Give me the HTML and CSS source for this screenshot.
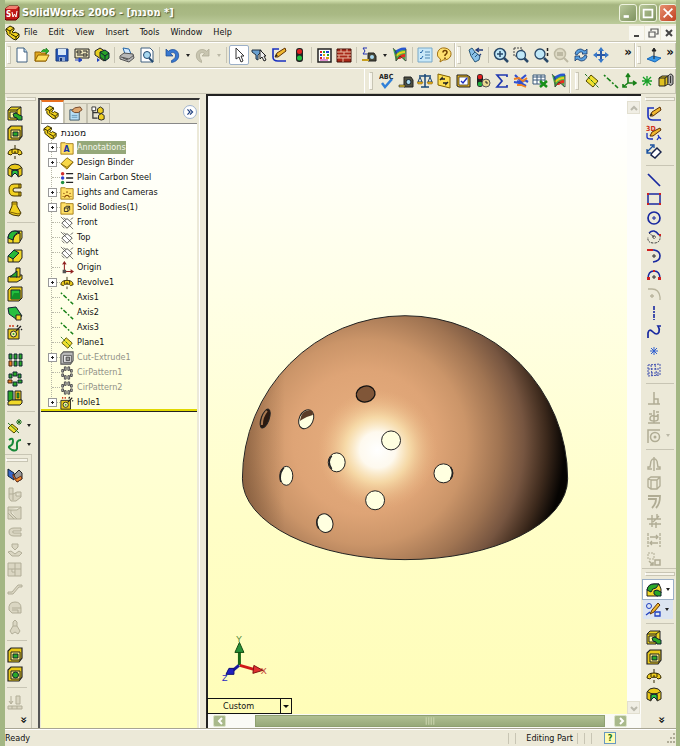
FILE: index.html
```html
<!DOCTYPE html>
<html lang="en">
<head>
<meta charset="utf-8">
<meta name="viewport" content="width=device-width, initial-scale=1">
<title>SolidWorks 2006 - [מסננת *]</title>
<link rel="stylesheet" href="styles.css">
</head>
<body>
<svg class="defs" aria-hidden="true">
<defs>
<symbol id="part" viewBox="0 0 16 16"><path d="M1 4l4-3 4 2v2l-2 2 2 1 1-1 4 2v3l-3 3-3-1-6-5V7L1 6z" fill="#f0d020" stroke="#2a2400"/><path d="M1 4l4 2 4-3M5 6v3M6 9l5 3 3-3M11 12v2" fill="none" stroke="#2a2400"/></symbol>
<symbol id="app" viewBox="0 0 16 16"><path d="M1 4l4-3h9l1 1v10l-3 3H2l-1-1z" fill="#c01818" stroke="#600"/><path d="M1 4l4-3h10l-3 3z" fill="#f08070"/><text x="2" y="12" font-size="8" font-weight="bold" fill="#fff">S</text><path d="M8 7l1 5 1.500-3 1.500 3 1-6" fill="none" stroke="#fff"/></symbol>
<symbol id="new" viewBox="0 0 16 16"><path d="M3 1h7l3 4v10H3z" fill="#fff" stroke="#406080"/><path d="M10 1v4h3" fill="#b8d8f0" stroke="#406080"/></symbol>
<symbol id="open" viewBox="0 0 16 16"><path d="M1 5h5l1 1h5v8H1z" fill="#e0a820" stroke="#906000"/><path d="M1 14l3-6h11l-3 6z" fill="#ffe060" stroke="#906000"/><path d="M7 5q2-4 5-2V1l3 3-3 3V5" fill="#30b030" stroke="#107010" stroke-width=".6"/></symbol>
<symbol id="save" viewBox="0 0 16 16"><path d="M2 2h12v12H2z" fill="#2858b8" stroke="#183878"/><path d="M4 2h8v6H4z" fill="#d8e8f8"/><path d="M5 10h6v4H5z" fill="#90a8d0"/><path d="M6 11h2v3H6z" fill="#183878"/></symbol>
<symbol id="drawing" viewBox="0 0 16 16"><path d="M1 2h14v9H1z" fill="#e8e0b8" stroke="#222"/><path d="M3 4h4v2H3zM3 8h5M9 4h4M9 7h4v2H9zM13 4v2" fill="none" stroke="#222"/><path d="M1 13h6M5 11l3 2-3 2z" fill="#2040c0" stroke="#2040c0"/></symbol>
<symbol id="assembly" viewBox="0 0 16 16"><path d="M1 4l5-3 8 5v4l-4 4-9-6z" fill="#e8d020" stroke="#222"/><path d="M6 5l5-2 4 3v5l-4 3-5-4z" fill="#28a028" stroke="#123"/><path d="M6 5l5 4 4-3M11 9v5" fill="none" stroke="#123"/><path d="M0 13h5M3 11l3 2-3 2z" fill="#2040c0"/></symbol>
<symbol id="print" viewBox="0 0 16 16"><path d="M4 1l6 1 2 5H6z" fill="#d0e8ff" stroke="#2868a8"/><path d="M1 9l4-3 9 1 1 4-5 4-9-3z" fill="#b8b8b8" stroke="#555"/><path d="M2 10l8 2 5-4M4 11l5 2" fill="none" stroke="#555"/></symbol>
<symbol id="preview" viewBox="0 0 16 16"><path d="M2 1h9l3 3v11H2z" fill="#fff" stroke="#406080"/><circle cx="8" cy="8" r="3.500" fill="#a8d8f0" stroke="#204870"/><path d="M10 11l4 4" stroke="#204870" stroke-width="2"/></symbol>
<symbol id="undo" viewBox="0 0 16 16"><path d="M2 2v7h7L6.500 6.500C9 4.500 12 6 11.500 9c-.2 2-2 3.500-4 4.500v2c4-.5 7-3 7.200-6.500C15 3 8.500.5 4.300 4.300z" fill="#3878d0" stroke="#184890" stroke-width=".7"/></symbol>
<symbol id="redo" viewBox="0 0 16 16"><path d="M14 2v7H7l2.500-2.500C7 4.500 4 6 4.500 9c.2 2 1 3 2 4.500v2C3 14 1.500 12 1.300 9 1 3 7.500.5 11.700 4.300z" fill="#c8c5b0" stroke="#aaa792" stroke-width=".7"/></symbol>
<symbol id="cursor" viewBox="0 0 16 16"><path d="M5 1v11l3-2 2 5 2-1-2-5h3z" fill="#fff" stroke="#333"/></symbol>
<symbol id="filter" viewBox="0 0 16 16"><path d="M1 3h9v2L7 8v5l-2-1V8L1 5z" fill="#68a0d0" stroke="#234"/><path d="M9 3l6 6h-2l2 4-2 1-2-4-2 2z" fill="#eee" stroke="#222"/></symbol>
<symbol id="sketch" viewBox="0 0 16 16"><path d="M8 2H2v8q0 4 5 4h8" fill="none" stroke="#1830c0" stroke-width="1.600"/><path d="M4 10l2-4 8-5 1 3-8 6z" fill="#f0b830" stroke="#603000"/><path d="M4 10l1-3 2 2z" fill="#222"/></symbol>
<symbol id="light" viewBox="0 0 16 16"><rect x="5" y="1" width="7" height="14" rx="3" fill="#222"/><circle cx="8.500" cy="4.500" r="2.500" fill="#e02020"/><circle cx="8.500" cy="11" r="2.500" fill="#20c040"/></symbol>
<symbol id="palette" viewBox="0 0 16 16"><path d="M2 2h13v13H2z" fill="#fff" stroke="#222" stroke-width="1.500"/><path d="M4 5h2M4 11h2" stroke="#e02020" stroke-width="2"/><path d="M7 5h2M11 8h2" stroke="#20a030" stroke-width="2"/><path d="M10 5h3M4 8h2" stroke="#2040d0" stroke-width="2"/><path d="M7 8h2M10 11h3" stroke="#e0a010" stroke-width="2"/><path d="M7 11h2M4 13h8" stroke="#c020a0"/></symbol>
<symbol id="bricks" viewBox="0 0 16 16"><path d="M1 2h14v13H1z" fill="#a82818" stroke="#401008"/><path d="M1 5h14M1 8h14M1 11h14M5 2v3M11 2v3M8 5v3M3 8v3M12 8v3M7 11v4" stroke="#e8b8a0"/></symbol>
<symbol id="measure" viewBox="0 0 16 16"><path d="M6 1H2l2 3-2 3h4" fill="none" stroke="#2030b0"/><path d="M7 6h6l2 3v5H7z" fill="#484838" stroke="#222"/><circle cx="11" cy="10" r="2" fill="#a8d8f0"/><path d="M1 13h7" stroke="#c8a020" stroke-width="2"/></symbol>
<symbol id="tape" viewBox="0 0 16 16"><path d="M6 4h7l2 3v7H6z" fill="#505040" stroke="#222"/><circle cx="10.500" cy="9" r="2.500" fill="#a8d8f0" stroke="#16222c"/><path d="M1 12h6v2H1z" fill="#e0c030" stroke="#222" stroke-width=".6"/></symbol>
<symbol id="colormap" viewBox="0 0 16 16"><path d="M1 2l3 1q6 1 10-1l-1 12-4-5-5 5z" fill="#48b848"/><path d="M3 6q5-5 11-4" fill="none" stroke="#2858d0" stroke-width="2.500"/><path d="M4 9q4-4 9-4" fill="none" stroke="#e8d020" stroke-width="2"/><path d="M5 12q3-5 8-5v3q-3 0-5 2z" fill="#e83020"/><path d="M1 1l3 4v9l4-5 6 5V2" fill="none" stroke="#333" stroke-width=".8"/></symbol>
<symbol id="checklist" viewBox="0 0 16 16"><path d="M1 1h14v14H1z" fill="#c8e8f8" stroke="#78a8c8"/><path d="M3 5l1 1 2-3M3 11l1 1 2-3" fill="none" stroke="#2868a8"/><path d="M8 5h5M8 8h5M8 11h5" stroke="#5088b0"/></symbol>
<symbol id="help" viewBox="0 0 16 16"><path d="M8 1a7 6 0 1 1-2 12l-3 2 .5-3A6.500 6 0 0 1 8 1z" fill="#ffe070" stroke="#a07010"/><path d="M6 5.500q0-2 2-2t2 2q0 1-2 2.500V9M8 10.500v1.500" fill="none" stroke="#704000" stroke-width="1.500"/></symbol>
<symbol id="torch" viewBox="0 0 16 16"><path d="M1 3l3-2 3 4 5 4-1 4-4 2-4-6z" fill="#88c0e8" stroke="#285878"/><path d="M4 8l3-3M7 10l3-3" stroke="#285878"/><path d="M8 3h7M11 1L8 3l3 2M13 7l-2 2" fill="none" stroke="#203878" stroke-width="1.300"/></symbol>
<symbol id="zoomfit" viewBox="0 0 16 16"><circle cx="7" cy="7" r="5.500" fill="#c0e8f8" stroke="#284868" stroke-width="1.500"/><path d="M4 7h6M7 4v6" stroke="#284868" stroke-width="1.500"/><path d="M11 11l4 4" stroke="#284868" stroke-width="2.500"/></symbol>
<symbol id="zoomarea" viewBox="0 0 16 16"><path d="M1 1h8v8H1z" fill="none" stroke="#444" stroke-dasharray="2 1"/><circle cx="8" cy="8" r="4.500" fill="#c0e8f8" stroke="#284868" stroke-width="1.300"/><path d="M11 11l4 4" stroke="#284868" stroke-width="2.500"/></symbol>
<symbol id="zoomio" viewBox="0 0 16 16"><circle cx="7" cy="7" r="5" fill="#c0e8f8" stroke="#284868" stroke-width="1.300"/><path d="M14.500 1v3M14.500 6v3" stroke="#222" stroke-width="1.500"/><path d="M11 11l4 4" stroke="#284868" stroke-width="2.500"/></symbol>
<symbol id="zoomsel" viewBox="0 0 16 16"><circle cx="7" cy="7" r="5.500" fill="#dedac5" stroke="#bdb9a3" stroke-width="1.500"/><path d="M4 6h6M4 8h6M11 11l4 4" stroke="#bdb9a3" stroke-width="2"/></symbol>
<symbol id="rotate" viewBox="0 0 16 16"><path d="M2 7q1-5 6-5l4 2 2-2v5H9l1-1q-3-3-6 2zM14 9q-1 5-6 5l-4-2-2 2V9h5L6 10q3 3 6-2z" fill="#58a0e0" stroke="#183868" stroke-width=".8"/></symbol>
<symbol id="pan" viewBox="0 0 16 16"><path d="M8 2v12M2 8h12" stroke="#2858a8" stroke-width="2"/><path d="M8 0l3 4H5zM8 16l3-4H5zM0 8l4-3v6zM16 8l-4-3v6z" fill="#3878c8"/></symbol>
<symbol id="normal" viewBox="0 0 16 16"><path d="M1 12l6-3 8 2-6 4z" fill="#3898e8" stroke="#1868b8"/><path d="M8 12V3M6 4l2-3 2 3z" fill="#222" stroke="#222"/></symbol>
<symbol id="spell" viewBox="0 0 16 16"><text x="0" y="6" font-size="7" font-weight="bold" fill="#222">ABC</text><path d="M3 10l3 4 7-8" fill="none" stroke="#3080d8" stroke-width="2.500"/></symbol>
<symbol id="scale" viewBox="0 0 16 16"><path d="M8 1v13M2 3h12M4 14h8" stroke="#184878" stroke-width="1.500"/><path d="M3 4L1 9h4zM13 4l-2 5h4z" fill="none" stroke="#184878"/><path d="M0 9h6l-1 2H1zM10 9h6l-1 2h-4z" fill="#e8b820" stroke="#805000" stroke-width=".5"/></symbol>
<symbol id="section" viewBox="0 0 16 16"><path d="M2 1l12 3v11L2 12z" fill="#ffe050" stroke="#806000"/><path d="M4 7l2-2v1h3M12 9l-2 2v-1H7" fill="none" stroke="#222" stroke-width="1.500"/></symbol>
<symbol id="check" viewBox="0 0 16 16"><path d="M2 2h10l3 2v10H4l-2-1z" fill="#e0b020" stroke="#222"/><path d="M4 4h9v8H4z" fill="#fff" stroke="#222" stroke-width=".7"/><path d="M6 8l2 2 4-5" fill="none" stroke="#2030c0" stroke-width="1.500"/></symbol>
<symbol id="stats" viewBox="0 0 16 16"><rect x="2" y="1" width="6" height="13" rx="3" fill="#222"/><circle cx="5" cy="4" r="2.300" fill="#e02020"/><circle cx="5" cy="11" r="2.300" fill="#20b040"/><circle cx="11" cy="10" r="4" fill="#e8d890" stroke="#555"/><path d="M11 8v2h2" fill="none" stroke="#222"/></symbol>
<symbol id="sigma" viewBox="0 0 16 16"><path d="M13 4V2H3l5 6-5 6h10v-2" fill="none" stroke="#2038b0" stroke-width="1.700"/></symbol>
<symbol id="deviation" viewBox="0 0 16 16"><path d="M2 2l5 5 6-5M4 8l9 5M1 9l6 1 5-3 3 2" fill="none" stroke="#3050d0" stroke-width="2.200"/><path d="M1 6l5-1 4 3 4-3M4 12l4 0 5 2" fill="none" stroke="#f08020" stroke-width="1.800"/></symbol>
<symbol id="table" viewBox="0 0 16 16"><path d="M1 2h12v9H1z" fill="#fff" stroke="#385878"/><path d="M1 4h12M1 7h12M5 2v9M9 2v9" stroke="#385878"/><path d="M8 8l7 6M15 8l-7 6" stroke="#189018" stroke-width="2.500"/></symbol>
<symbol id="plane" viewBox="0 0 16 16"><path d="M7 2l7 6-5 6-7-6z" fill="#f0e030" stroke="#504800"/><path d="M1 1l14 14" stroke="#207020" stroke-dasharray="3 1"/></symbol>
<symbol id="planeo" viewBox="0 0 16 16"><path d="M8 3l6 5-6 6-6-6z" fill="#fff" stroke="#444"/><path d="M1 1l14 14M4 2l3 2M2 11l3 3M12 4l3-2" fill="none" stroke="#444" stroke-width=".8"/></symbol>
<symbol id="axis" viewBox="0 0 16 16"><path d="M1 2l14 13" stroke="#188018" stroke-width="1.600" stroke-dasharray="2 2 5 2"/></symbol>
<symbol id="csys" viewBox="0 0 16 16"><path d="M7 1v9h7M7 10l-5 4M5 4l2-3 2 3M12 8l3 2-3 2M2 11v3h4" fill="none" stroke="#188018" stroke-width="1.600"/></symbol>
<symbol id="star" viewBox="0 0 16 16"><path d="M8 3v10M3 8h10M4 4l8 8M12 4l-8 8" stroke="#18a028" stroke-width="1.300"/></symbol>
<symbol id="bluestar" viewBox="0 0 16 16"><path d="M8 4v8M4 8h8M5 5l6 6M11 5l-6 6" stroke="#3060d0"/></symbol>
<symbol id="mate" viewBox="0 0 16 16"><path d="M1 5l3-2h6v8l-3 2H1z" fill="#e0c020" stroke="#222"/><path d="M1 5h6v8M7 5l3-2" fill="none" stroke="#222"/><path d="M10 10V3q3-4 5 0v8q-2 3-5 0" fill="#aaa" stroke="#333"/><path d="M12.500 3v7" stroke="#333"/></symbol>
<symbol id="extrude" viewBox="0 0 16 16"><path d="M1 4l3-3h10v8l-4 5H1z" fill="#e8d020" stroke="#222"/><path d="M1 4h9v10M10 4l4-3" fill="none" stroke="#222"/><path d="M3 6h6v6H3z" fill="#fff7a0" stroke="#222"/><path d="M6 8l3-1 3 2 3 1v4h-4l-1-2-3-1z" fill="#28a828" stroke="#123"/></symbol>
<symbol id="cutex" viewBox="0 0 16 16"><path d="M1 4l3-3h11v10l-3 4H1z" fill="#e8c818" stroke="#222" stroke-width="1.200"/><path d="M4 5h9v8H4z" fill="#fff080" stroke="#222"/><path d="M6 7h5v4H6z" fill="#28a828" stroke="#123"/></symbol>
<symbol id="cutexg" viewBox="0 0 16 16"><path d="M1 4l3-3h11v10l-3 4H1z" fill="#bbb" stroke="#555" stroke-width="1.200"/><path d="M4 5h9v8H4z" fill="#e6e6e6" stroke="#555"/><path d="M7 7h4v4H7z" fill="#999" stroke="#444"/></symbol>
<symbol id="cutcirc" viewBox="0 0 16 16"><path d="M1 4l3-3h11v10l-3 4H1z" fill="#e8c818" stroke="#222" stroke-width="1.200"/><path d="M4 5h9v8H4z" fill="#fff080" stroke="#222"/><circle cx="8.500" cy="9" r="3" fill="#28a828" stroke="#123"/></symbol>
<symbol id="revolve" viewBox="0 0 16 16"><path d="M1 10q0-5 7-5t7 5l-3 1q-1-2-4-2t-4 2z" fill="#f0d020" stroke="#332800"/><path d="M8 1v4M8 7v3M8 12v3M5 5v4M11 5v4" stroke="#332800"/></symbol>
<symbol id="revcut" viewBox="0 0 16 16"><path d="M1 5q2-4 7-4t7 4v7l-4 2V7H5v7l-4-2z" fill="#e8c818" stroke="#222"/><path d="M5 13V8q3-2 6 0v5L8 10z" fill="#28c040" stroke="#123"/><path d="M2 5q6 4 12 0" fill="none" stroke="#222"/></symbol>
<symbol id="sweep" viewBox="0 0 16 16"><path d="M14 2H7Q2 2 2 8t5 6h7v-4H8q-2 0-2-2t2-2h6z" fill="#f0d020" stroke="#403000"/><path d="M12 2v4M12 10v4" stroke="#403000"/></symbol>
<symbol id="loft" viewBox="0 0 16 16"><path d="M5 1h5v4l4 7-2 3-6-1-4-2 3-7z" fill="#f0d020" stroke="#403000"/><path d="M5 3h5M3 11l8 2 2-1" fill="none" stroke="#806000"/></symbol>
<symbol id="fillet" viewBox="0 0 16 16"><path d="M1 14V8q1-6 7-6h7v7l-3 5z" fill="#f0d828" stroke="#222"/><path d="M1 9q1-7 7-7l5 1q-6 1-7 8z" fill="#28b838" stroke="#123"/><path d="M6 14v-3q1-6 7-7v8" fill="none" stroke="#222"/></symbol>
<symbol id="chamfer" viewBox="0 0 16 16"><path d="M1 14V8l6-6h8v8l-3 4z" fill="#f0d828" stroke="#222"/><path d="M1 8l6-6 5 3-6 6z" fill="#28b838" stroke="#123"/><path d="M6 11v3" stroke="#222"/></symbol>
<symbol id="rib" viewBox="0 0 16 16"><path d="M1 10l5-2h9v4l-5 3H1z" fill="#e8c818" stroke="#222"/><path d="M9 1h4v9H9z" fill="#e8c818" stroke="#222"/><path d="M3 10l7-6v6z" fill="#28a828" stroke="#123"/></symbol>
<symbol id="shell" viewBox="0 0 16 16"><path d="M1 4l3-3h11v11l-3 3H1z" fill="#e8c818" stroke="#222"/><path d="M4 4h9v9H4z" fill="#20c040" stroke="#123"/><path d="M7 7h6v6H4z" fill="#109028"/></symbol>
<symbol id="draft" viewBox="0 0 16 16"><path d="M1 3l8-1 6 9-6 3-7-5z" fill="#28c040" stroke="#123"/><path d="M9 10h5v5H9z" fill="#f0d828" stroke="#222"/></symbol>
<symbol id="hole" viewBox="0 0 16 16"><path d="M1 5h11v10H1z" fill="#e8c818" stroke="#222"/><circle cx="6.500" cy="10" r="3" fill="#f8f0a0" stroke="#222"/><circle cx="6.500" cy="10" r="1" fill="#28a828"/><path d="M9 7l5-5M11 1l-1 2M14 5l1 1" stroke="#222" stroke-width="1.300"/><path d="M3 1v2M6 1v2" stroke="#d04020" stroke-width="1.500"/></symbol>
<symbol id="linpat" viewBox="0 0 16 16"><path d="M2 2h3v5H2zM7 2h3v5H7zM12 2h3v5h-3zM7 9h3v5H7zM12 9h3v5h-3z" fill="#28a828" stroke="#123"/><path d="M2 9h3v5H2z" fill="#f08020" stroke="#421"/></symbol>
<symbol id="cirpat" viewBox="0 0 16 16"><path d="M6 1h4v4H6zM11 3h3v4h-3zM11 9h4v3h-4zM6 11h4v4H6zM2 3h3v4H2z" fill="#28a828" stroke="#123"/><path d="M1 9h4v3H1z" fill="#f08020" stroke="#421"/></symbol>
<symbol id="cirpatg" viewBox="0 0 16 16"><path d="M5 1h2v4H5zM9 1h2v4H9zM12 4h2v3h-2zM12 9h2v3h-2zM5 11h2v4H5zM9 11h2v4H9zM2 4h2v3H2zM2 9h2v3H2z" fill="#bbb" stroke="#444"/></symbol>
<symbol id="mirror" viewBox="0 0 16 16"><path d="M1 1h5v10H1z" fill="#28a828" stroke="#123"/><path d="M8 1h6v9H8z" fill="#e8c818" stroke="#222"/><path d="M10 3h2v5h-2z" fill="#28a828" stroke="#222" stroke-width=".6"/><path d="M1 12l3-2h11v3l-2 2H1z" fill="#f0d828" stroke="#222"/></symbol>
<symbol id="refplane" viewBox="0 0 16 16"><path d="M5 6l6 5-4 4-6-5z" fill="#f0e030" stroke="#504800"/><path d="M1 5l11 10M12 1v6M9 4h6M10 2l4 4M14 2l-4 4" stroke="#207020"/></symbol>
<symbol id="spiral" viewBox="0 0 16 16"><path d="M2 3q4-3 4 1T3 9t2 4q6 2 5-4t4-6" fill="none" stroke="#188838" stroke-width="2"/></symbol>
<symbol id="split" viewBox="0 0 16 16"><path d="M1 2l6 4v7L1 9z" fill="#3868c8" stroke="#123"/><path d="M7 8l5-5 3 3v6l-5 3z" fill="#999" stroke="#222"/><path d="M6 7l3 5 5-3 1 3-5 3-4-5z" fill="#f08828" stroke="#632"/></symbol>
<symbol id="g1" viewBox="0 0 16 16"><path class="dim" d="M2 2h4v6l4-2h4v5l-5 4H4l-2-3zM2 8h4v6M9 7v3h5"/></symbol>
<symbol id="g2" viewBox="0 0 16 16"><path class="dim" d="M1 2h13v12H1zM1 5h9l4-3M4 5v3l6 6M1 8l6 6"/></symbol>
<symbol id="g3" viewBox="0 0 16 16"><path class="dim" d="M14 4H7q-5 0-5 4t5 4h7V9H7q-2 0-1-2h8z"/></symbol>
<symbol id="g4" viewBox="0 0 16 16"><path class="dim" d="M5 1h6v3l-3 3-3-3zM1 9l3-1 4 3 4-3 3 2-3 3H5z"/></symbol>
<symbol id="g5" viewBox="0 0 16 16"><path class="dim" d="M1 1h13v13H1zM8 1v13M1 7h13M5 7v3h3"/></symbol>
<symbol id="g6" viewBox="0 0 16 16"><path class="dim" d="M1 11h4l6-7h4v2h-3l-6 7H1z"/></symbol>
<symbol id="g7" viewBox="0 0 16 16"><path class="dim" d="M2 10q-1-8 6-8 6 0 6 6v5H5zM5 8h9M5 10h6v3"/></symbol>
<symbol id="g8" viewBox="0 0 16 16"><path class="dim" d="M8 1l2 2v4l3 5-2 3-3-2-3 2-2-3 3-5V3zM6 7h4"/></symbol>
<symbol id="g9" viewBox="0 0 16 16"><path class="dim" d="M4 2v7M2 7l2 3 2-3M9 2h4v8H9zM1 12h14v3H1zM5 12v3M10 12v3"/></symbol>
<symbol id="sk3d" viewBox="0 0 16 16"><text x="0" y="6" font-size="7" font-weight="bold" fill="#d03020">3D</text><path d="M1 8v4q0 2 4 2h2M12 10l1 2M11 15l2-3 2 2" fill="none" stroke="#1830c0" stroke-width="1.300"/><path d="M4 11l2-4 8-4 1 2-8 6z" fill="#f0b830" stroke="#603000"/></symbol>
<symbol id="dim" viewBox="0 0 16 16"><path d="M6 9l5-5 4 4-6 6-4-3z" fill="#fff" stroke="#16224a" stroke-width="1.500"/><path d="M1 8l6-6M1 5v4h4M4 1h4v3" fill="none" stroke="#1850a0" stroke-width="1.300"/></symbol>
<symbol id="line" viewBox="0 0 16 16"><path d="M2 2l12 12" stroke="#1828a0" stroke-width="1.700"/></symbol>
<symbol id="rect" viewBox="0 0 16 16"><path d="M2 3h12v10H2z" fill="none" stroke="#1828a0" stroke-width="1.500"/><path d="M1 2h2v2H1zM13 12h2v2h-2zM1 12h2v2H1zM13 2h2v2h-2z" fill="#d02020"/></symbol>
<symbol id="circle" viewBox="0 0 16 16"><circle cx="8" cy="8" r="6" fill="none" stroke="#1828a0" stroke-width="1.700"/><path d="M8 6v4M6 8h4" stroke="#1828a0"/></symbol>
<symbol id="carc" viewBox="0 0 16 16"><path d="M3 4q5-5 10 2" fill="none" stroke="#1828a0" stroke-width="1.500"/><path d="M14 6q1 8-6 8T2 8M3 4l5 4M8 6v4M6 8h4" fill="none" stroke="#333" stroke-dasharray="2 1"/><path d="M13 5h2v2h-2z" fill="#d02020"/></symbol>
<symbol id="tarc" viewBox="0 0 16 16"><path d="M1 2h7q6 1 6 6t-7 6" fill="none" stroke="#1828a0" stroke-width="1.600"/><path d="M1 1h6v2H1z" fill="#d02020"/><path d="M8 6v4M6 8h4" stroke="#333"/></symbol>
<symbol id="parc" viewBox="0 0 16 16"><path d="M2 12q0-8 6-8t6 8" fill="none" stroke="#1828a0" stroke-width="1.500"/><path d="M1 10h3v3H1zM12 10h3v3h-3zM7 3h2v2H7z" fill="#d02020"/><path d="M8 8v4M6 10h4" stroke="#333"/></symbol>
<symbol id="sfil" viewBox="0 0 16 16"><path d="M2 3h4q7 0 8 8v3M6 8v4M4 10h4" fill="none" stroke="#b8b49c" stroke-width="1.300"/></symbol>
<symbol id="cline" viewBox="0 0 16 16"><path d="M8 1v14" stroke="#1828a0" stroke-width="1.600" stroke-dasharray="4 1 2 1"/></symbol>
<symbol id="spline" viewBox="0 0 16 16"><path d="M2 14V9q1-5 5-1t6 0q1-3-1-6h3" fill="none" stroke="#1828a0" stroke-width="1.700"/></symbol>
<symbol id="hatch" viewBox="0 0 16 16"><path d="M2 3l12-1v11l-12 1zM2 7h12M2 11h12M5 3l1 11M9 3l2 11" fill="none" stroke="#4050b0" stroke-dasharray="2 1"/></symbol>
<symbol id="perp" viewBox="0 0 16 16"><path d="M8 2v12M2 14h12M8 9h4v5" fill="none" stroke="#b0ac94" stroke-width="1.500"/></symbol>
<symbol id="rel" viewBox="0 0 16 16"><path d="M8 1v13M2 14h12M4 10q0-4 4-3t4-2v5q0 2-4 2t-4-2M3 5h3M10 3h3" fill="none" stroke="#b0ac94" stroke-width="1.500"/></symbol>
<symbol id="qsnap" viewBox="0 0 16 16"><path d="M2 15V2h12" fill="none" stroke="#b0ac94" stroke-width="1.500"/><circle cx="9" cy="9" r="4.500" fill="none" stroke="#b0ac94" stroke-width="1.500"/><circle cx="9" cy="9" r="1.500" fill="#b0ac94"/></symbol>
<symbol id="smir" viewBox="0 0 16 16"><path d="M8 1v14M5 5L4 11H2v2h4M11 5l1 6h2v2h-4M5 5q3-5 6 0" fill="none" stroke="#b0ac94" stroke-width="1.400"/></symbol>
<symbol id="conv" viewBox="0 0 16 16"><path d="M2 4l3-2h9v9l-3 3H5l-3-2zM5 5h6v9M2 4l3 1v9M11 5l3-3" fill="none" stroke="#b0ac94" stroke-width="1.300"/></symbol>
<symbol id="offs" viewBox="0 0 16 16"><path d="M2 2h12q0 8-4 12M2 5h8q0 5-4 9" fill="none" stroke="#b0ac94" stroke-width="1.800"/></symbol>
<symbol id="trim" viewBox="0 0 16 16"><path d="M1 6h14M3 11h12M6 2v12M11 1v5M10 9v6M7 9l6-6" fill="none" stroke="#b0ac94" stroke-width="1.400"/></symbol>
<symbol id="ext" viewBox="0 0 16 16"><path d="M2 1v14M14 1v14" stroke="#b0ac94" stroke-width="1.300" stroke-dasharray="3 1"/><path d="M4 5h8M4 11h8M10 3l2 2-2 2M6 9l-2 2 2 2" fill="none" stroke="#b0ac94" stroke-width="1.300"/></symbol>
<symbol id="mov" viewBox="0 0 16 16"><path d="M2 2h6v6H2z" fill="none" stroke="#b0ac94" stroke-dasharray="2 1"/><path d="M9 9h5v5H9zM3 10l4 4M4 14h3v-3" fill="none" stroke="#b0ac94" stroke-width="1.500"/></symbol>
<symbol id="featmenu" viewBox="0 0 16 16"><path d="M1 14V8q1-6 7-6h5l2 5v4l-3 3z" fill="#f0d828" stroke="#222"/><path d="M1 8q1-6 7-6h5l-3 4q-4 0-5 4z" fill="#28a828" stroke="#123"/><path d="M8 9l3-1 4 2v4h-4l-3-2z" fill="#28a828" stroke="#123"/></symbol>
<symbol id="sketchmenu" viewBox="0 0 16 16"><circle cx="4" cy="4" r="2.500" fill="none" stroke="#2040c0"/><path d="M5 12l2-4 6-7 2 2-6 7z" fill="#f0b830" stroke="#603000"/><path d="M10 10h5v4h-5zM1 13l4-3" fill="none" stroke="#2040c0" stroke-width="1.300"/></symbol>
<symbol id="prop" viewBox="0 0 16 16"><path d="M2 4h10v11H2z" fill="#b8e0f8" stroke="#405868"/><path d="M4 10h6M4 12h6" stroke="#6898b8"/><path d="M4 5l3-3 6-1 2 3-4 3H7z" fill="#e0a870" stroke="#704020"/></symbol>
<symbol id="config" viewBox="0 0 16 16"><path d="M2 2v11h5M2 7h5" fill="none" stroke="#333" stroke-width="1.300"/><path d="M1 1h4v4H1z" fill="#fff" stroke="#333"/><path d="M7 3l3-2 3 2v4l-3 1-3-1zM8 10l3-2 3 2v4l-3 1-3-1z" fill="#f0d020" stroke="#222"/></symbol>
<symbol id="annot" viewBox="0 0 16 16"><path d="M1 2h5l1 1h8v12H1z" fill="#ffe068" stroke="#a07810"/><text x="4" y="13" font-size="10" font-weight="bold" fill="#1838a0">A</text></symbol>
<symbol id="binder" viewBox="0 0 16 16"><path d="M1 9l7-7 7 5-7 8z" fill="#f8d848" stroke="#806000"/><path d="M1 9l7 4 7-6" fill="none" stroke="#806000"/></symbol>
<symbol id="material" viewBox="0 0 16 16"><circle cx="3" cy="3" r="2" fill="#d03030"/><circle cx="3" cy="8" r="2" fill="#3040d0"/><circle cx="3" cy="13" r="2" fill="#209040"/><path d="M7 3h8M7 8h8M7 13h8" stroke="#222" stroke-width="1.700"/></symbol>
<symbol id="lights" viewBox="0 0 16 16"><path d="M1 2h5l1 1h8v12H1z" fill="#ffe068" stroke="#a07810"/><path d="M5 13q3-5 6 0M8 6v2M4 8l1 1M12 8l-1 1M3 12h1M12 12h1" fill="none" stroke="#804000" stroke-width="1.200"/></symbol>
<symbol id="bodies" viewBox="0 0 16 16"><path d="M1 2h5l1 1h8v12H1z" fill="#ffe068" stroke="#a07810"/><path d="M5 8l2-2h4v4l-2 2H5zM5 8h4v4M9 8l2-2" fill="none" stroke="#222"/></symbol>
<symbol id="origin" viewBox="0 0 16 16"><path d="M5 2v10h9M3 4l2-3 2 3M12 10l3 2-3 2" fill="none" stroke="#902020" stroke-width="1.200"/><path d="M3 10h4v4H3z" fill="#555"/></symbol>
</defs>
</svg>

<header class="titlebar">
  <svg class="ico"><use href="#app"/></svg>
  <h1>SolidWorks 2006 - [מסננת *]</h1>
  <button class="win" aria-label="Minimize"><svg viewBox="0 0 16 16"><path d="M3 12h6" stroke="#fff" stroke-width="3"/></svg></button>
  <button class="win" aria-label="Maximize"><svg viewBox="0 0 16 16"><path d="M3 4h10v9H3z" fill="none" stroke="#fff" stroke-width="2"/></svg></button>
  <button class="win close" aria-label="Close"><svg viewBox="0 0 16 16"><path d="M3 3l10 10M13 3L3 13" stroke="#fff" stroke-width="2"/></svg></button>
</header>

<nav class="menubar">
  <svg class="ico"><use href="#part"/></svg>
  <button>File</button><button>Edit</button><button>View</button><button>Insert</button><button>Tools</button><button>Window</button><button>Help</button>
  <span class="docwin">
    <button aria-label="Minimize document"><svg viewBox="0 0 12 12"><path d="M3 9h5" stroke="#444" stroke-width="2"/></svg></button>
    <button aria-label="Restore document"><svg viewBox="0 0 12 12"><path d="M4 4V2h7v5H9M2 5h6v5H2z" fill="none" stroke="#555" stroke-width="1.200"/></svg></button>
    <button aria-label="Close document"><svg viewBox="0 0 12 12"><path d="M3 3l6 6M9 3l-6 6" stroke="#444" stroke-width="2"/></svg></button>
  </span>
</nav>

<div class="toolrow">
  <div class="bar main" role="toolbar" aria-label="Standard">
    <i class="grip"></i>
    <button aria-label="New"><svg><use href="#new"/></svg></button><button aria-label="Open"><svg><use href="#open"/></svg></button><button aria-label="Save"><svg><use href="#save"/></svg></button><button aria-label="Make drawing"><svg><use href="#drawing"/></svg></button><button aria-label="Make assembly"><svg><use href="#assembly"/></svg></button>
    <i class="sep"></i>
    <button aria-label="Print"><svg><use href="#print"/></svg></button><button aria-label="Print preview"><svg><use href="#preview"/></svg></button>
    <i class="sep"></i>
    <button aria-label="Undo"><svg><use href="#undo"/></svg></button><button class="drop" aria-label="Undo list"></button><button aria-label="Redo" disabled><svg><use href="#redo"/></svg></button><button class="drop" aria-label="Redo list" disabled></button>
    <i class="sep"></i>
    <button class="on" aria-label="Select"><svg><use href="#cursor"/></svg></button><button aria-label="Selection filter"><svg><use href="#filter"/></svg></button><button aria-label="Sketch"><svg><use href="#sketch"/></svg></button><button aria-label="Rebuild"><svg><use href="#light"/></svg></button>
    <i class="sep"></i>
    <button aria-label="Edit color"><svg><use href="#palette"/></svg></button><button aria-label="Edit texture"><svg><use href="#bricks"/></svg></button>
    <i class="sep"></i>
    <button aria-label="Measure"><svg><use href="#measure"/></svg></button><button class="drop" aria-label="Measure list"></button><button aria-label="Curvature"><svg><use href="#colormap"/></svg></button>
    <i class="sep"></i>
    <button aria-label="Options"><svg><use href="#checklist"/></svg></button><button aria-label="Help"><svg><use href="#help"/></svg></button>
  </div>
  <div class="bar view" role="toolbar" aria-label="View">
    <i class="grip"></i>
    <button aria-label="Previous view"><svg><use href="#torch"/></svg></button>
    <i class="sep"></i>
    <button aria-label="Zoom to fit"><svg><use href="#zoomfit"/></svg></button><button aria-label="Zoom to area"><svg><use href="#zoomarea"/></svg></button><button aria-label="Zoom in or out"><svg><use href="#zoomio"/></svg></button><button aria-label="Zoom to selection" disabled><svg><use href="#zoomsel"/></svg></button><button aria-label="Rotate view"><svg><use href="#rotate"/></svg></button><button aria-label="Pan"><svg><use href="#pan"/></svg></button>
    <button class="more">»</button>
  </div>
  <div class="bar orient" role="toolbar" aria-label="Standard views">
    <i class="grip"></i>
    <button aria-label="Normal to"><svg><use href="#normal"/></svg></button>
    <button class="more">»</button>
  </div>
</div>

<div class="toolrow second">
  <div class="bar tools" role="toolbar" aria-label="Tools">
    <i class="grip"></i>
    <button aria-label="Spelling"><svg><use href="#spell"/></svg></button><button aria-label="Measure"><svg><use href="#tape"/></svg></button><button aria-label="Mass properties"><svg><use href="#scale"/></svg></button><button aria-label="Section properties"><svg><use href="#section"/></svg></button><button aria-label="Check"><svg><use href="#check"/></svg></button><button aria-label="Feature statistics"><svg><use href="#stats"/></svg></button><button aria-label="Equations"><svg><use href="#sigma"/></svg></button><button aria-label="Deviation analysis"><svg><use href="#deviation"/></svg></button><button aria-label="Design table"><svg><use href="#table"/></svg></button><button aria-label="Analysis"><svg><use href="#colormap"/></svg></button>
  </div>
  <div class="bar refs" role="toolbar" aria-label="Reference geometry">
    <i class="grip"></i>
    <button aria-label="Plane"><svg><use href="#plane"/></svg></button><button aria-label="Axis"><svg><use href="#axis"/></svg></button><button aria-label="Coordinate system"><svg><use href="#csys"/></svg></button><button aria-label="Point"><svg><use href="#star"/></svg></button><button aria-label="Mate reference"><svg><use href="#mate"/></svg></button>
  </div>
</div>

<div class="workspace">
  <aside class="dock left">
    <div class="vbar" role="toolbar" aria-label="Features">
      <i class="grip"></i>
      <button aria-label="Extruded boss"><svg><use href="#extrude"/></svg></button><button aria-label="Extruded cut"><svg><use href="#cutex"/></svg></button><button aria-label="Revolved boss"><svg><use href="#revolve"/></svg></button><button aria-label="Revolved cut"><svg><use href="#revcut"/></svg></button><button aria-label="Sweep"><svg><use href="#sweep"/></svg></button><button aria-label="Loft"><svg><use href="#loft"/></svg></button>
      <i class="sep"></i>
      <button aria-label="Fillet"><svg><use href="#fillet"/></svg></button><button aria-label="Chamfer"><svg><use href="#chamfer"/></svg></button><button aria-label="Rib"><svg><use href="#rib"/></svg></button><button aria-label="Shell"><svg><use href="#shell"/></svg></button><button aria-label="Draft"><svg><use href="#draft"/></svg></button><button aria-label="Hole wizard"><svg><use href="#hole"/></svg></button>
      <i class="sep"></i>
      <button aria-label="Linear pattern"><svg><use href="#linpat"/></svg></button><button aria-label="Circular pattern"><svg><use href="#cirpat"/></svg></button><button aria-label="Mirror"><svg><use href="#mirror"/></svg></button>
      <i class="sep"></i>
      <div class="pair"><button aria-label="Reference geometry"><svg><use href="#refplane"/></svg></button><button class="drop" aria-label="Reference geometry list"></button></div>
      <div class="pair"><button aria-label="Curves"><svg><use href="#spiral"/></svg></button><button class="drop" aria-label="Curves list"></button></div>
    </div>
    <div class="vbar sheet" role="toolbar" aria-label="Sheet metal">
      <i class="grip"></i>
      <button aria-label="Base flange"><svg><use href="#split"/></svg></button><button aria-label="Edge flange" disabled><svg><use href="#g1"/></svg></button><button aria-label="Miter flange" disabled><svg><use href="#g2"/></svg></button><button aria-label="Hem" disabled><svg><use href="#g3"/></svg></button><button aria-label="Sketched bend" disabled><svg><use href="#g4"/></svg></button><button aria-label="Closed corner" disabled><svg><use href="#g5"/></svg></button><button aria-label="Jog" disabled><svg><use href="#g6"/></svg></button><button aria-label="Break corner" disabled><svg><use href="#g7"/></svg></button><button aria-label="Lofted bend" disabled><svg><use href="#g8"/></svg></button>
      <i class="sep"></i>
      <button aria-label="Cut"><svg><use href="#cutex"/></svg></button><button aria-label="Simple hole"><svg><use href="#cutcirc"/></svg></button>
      <i class="sep"></i>
      <button aria-label="Unfold" disabled><svg><use href="#g9"/></svg></button>
      <button class="more down">»</button>
    </div>
  </aside>

  <section class="manager">
    <div class="tabs">
      <button class="tab active" aria-label="FeatureManager"><svg><use href="#part"/></svg></button>
      <button class="tab" aria-label="PropertyManager"><svg><use href="#prop"/></svg></button>
      <button class="tab" aria-label="ConfigurationManager"><svg><use href="#config"/></svg></button>
      <button class="expand" aria-label="Expand"><svg viewBox="0 0 14 14"><path d="M4 4l3 3-3 3M7 4l3 3-3 3" fill="none" stroke="#204080" stroke-width="1.400"/></svg></button>
    </div>
    <div class="tree">
      <div class="root"><svg><use href="#part"/></svg><span>מסננת</span></div>
      <ul>
        <li class="plus"><svg><use href="#annot"/></svg><span class="sel">Annotations</span></li>
        <li class="plus"><svg><use href="#binder"/></svg><span>Design Binder</span></li>
        <li><svg><use href="#material"/></svg><span>Plain Carbon Steel</span></li>
        <li class="plus"><svg><use href="#lights"/></svg><span>Lights and Cameras</span></li>
        <li class="plus"><svg><use href="#bodies"/></svg><span>Solid Bodies(1)</span></li>
        <li><svg><use href="#planeo"/></svg><span>Front</span></li>
        <li><svg><use href="#planeo"/></svg><span>Top</span></li>
        <li><svg><use href="#planeo"/></svg><span>Right</span></li>
        <li><svg><use href="#origin"/></svg><span>Origin</span></li>
        <li class="plus"><svg><use href="#revolve"/></svg><span>Revolve1</span></li>
        <li><svg><use href="#axis"/></svg><span>Axis1</span></li>
        <li><svg><use href="#axis"/></svg><span>Axis2</span></li>
        <li><svg><use href="#axis"/></svg><span>Axis3</span></li>
        <li><svg><use href="#plane"/></svg><span>Plane1</span></li>
        <li class="plus off"><svg><use href="#cutexg"/></svg><span>Cut-Extrude1</span></li>
        <li class="off"><svg><use href="#cirpatg"/></svg><span>CirPattern1</span></li>
        <li class="off"><svg><use href="#cirpatg"/></svg><span>CirPattern2</span></li>
        <li class="plus"><svg><use href="#hole"/></svg><span>Hole1</span></li>
      </ul>
    </div>
  </section>

  <main class="viewport">
    <div class="canvas">
      <svg class="scene" viewBox="208 96 420 618" preserveAspectRatio="xMidYMid meet" role="img" aria-label="Hemispherical strainer with holes">
        <defs>
          <radialGradient id="body" gradientUnits="userSpaceOnUse" cx="365" cy="442" r="205">
            <stop offset="0" stop-color="#e8b080"/><stop offset=".35" stop-color="#dea476"/><stop offset=".5" stop-color="#cb9569"/><stop offset=".66" stop-color="#a07452"/><stop offset=".78" stop-color="#765540"/><stop offset=".89" stop-color="#3c291c"/><stop offset=".98" stop-color="#060402"/>
          </radialGradient>
          <radialGradient id="shine" gradientUnits="userSpaceOnUse" cx="378" cy="450" r="60">
            <stop offset="0" stop-color="#fff"/><stop offset=".3" stop-color="#fffdf4" stop-opacity=".95"/><stop offset=".55" stop-color="#fff0bc" stop-opacity=".65"/><stop offset="1" stop-color="#f0bc88" stop-opacity="0"/>
          </radialGradient>
          <linearGradient id="edge" gradientUnits="userSpaceOnUse" x1="242" y1="0" x2="285" y2="0"><stop offset="0" stop-color="#5a3a20" stop-opacity=".4"/><stop offset="1" stop-color="#5a3a20" stop-opacity="0"/></linearGradient>
        </defs>
        <path d="M242.500 479A163 163.500 0 0 1 568.500 479A163 81 0 0 1 242.500 479z" fill="url(#body)" stroke="#222"/>
        <path d="M243 479A163 163.500 0 0 1 405 316V560A163 81 0 0 1 243 479z" fill="url(#edge)"/>
        <circle cx="378" cy="450" r="60" fill="url(#shine)"/>
        <g fill="#ffffe0" stroke="#222">
          <circle cx="391.500" cy="440.500" r="9.500"/><ellipse cx="337" cy="462.500" rx="8.500" ry="9.500"/><ellipse cx="286.500" cy="476" rx="6.500" ry="9.500"/><circle cx="444" cy="473.500" r="9.500"/><circle cx="375.500" cy="500.500" r="9.500"/><ellipse cx="325" cy="523.500" rx="8" ry="9.500" transform="rotate(-20 325 523)"/><ellipse cx="306.500" cy="419" rx="7" ry="10" transform="rotate(25 306 419)"/>
        </g>
        <path d="M300 421q2-11 10-11 4 1 3 5-3 1-6 2-4 2-7 4z" fill="#5a3c28"/>
        <ellipse cx="366" cy="394" rx="9.500" ry="8" transform="rotate(-15 366 394)" fill="#805638" stroke="#111" stroke-width="1.300"/>
        <ellipse cx="265.500" cy="418.500" rx="4" ry="10" transform="rotate(20 265 418)" fill="#2c1a10" stroke="#222"/>
        <path d="M262 425q0-8 5-14" fill="none" stroke="#a87850" stroke-width="2"/>
        <path d="M281 482q-2-8 3-14M332 469q-5-7 0-13M319 529q-4-7 0-12M451 479q4-6 0-12" fill="none" stroke="#222" stroke-width="1.500"/>
        <path d="M239.500 666V651" stroke="#186818" stroke-width="3"/><path d="M235 653l4.500-10 4.500 10z" fill="#289038" stroke="#124a12"/>
        <path d="M240 666l14 4" stroke="#d01818" stroke-width="3"/><path d="M254 666l9 5-10 3z" fill="#e03030" stroke="#801010"/>
        <path d="M239 666l-6 5" stroke="#1818a0" stroke-width="3"/><path d="M234 669v6h-8l3-6z" fill="#2020c0" stroke="#101070"/>
        <text x="236" y="643" font-size="9" fill="#508838">Y</text><text x="261" y="675" font-size="9" fill="#c04030">X</text><text x="222" y="682" font-size="9" fill="#2828c0">Z</text>
      </svg>
      <div class="orientation"><select aria-label="View orientation"><option>Custom</option></select><svg viewBox="0 0 8 8"><path d="M1 3h6L4 6z" fill="#111"/></svg></div>
    </div>
    <div class="vscroll">
      <button aria-label="Scroll up" disabled><svg viewBox="0 0 10 10"><path d="M2 7l3-3 3 3" fill="none" stroke="#bbb9ac" stroke-width="2"/></svg></button>
      <button aria-label="Scroll down" disabled><svg viewBox="0 0 10 10"><path d="M2 4l3 3 3-3" fill="none" stroke="#bbb9ac" stroke-width="2"/></svg></button>
    </div>
    <div class="hscroll">
      <button aria-label="Scroll left"><svg viewBox="0 0 10 10"><path d="M7 2L4 5l3 3" fill="none" stroke="#fff" stroke-width="2"/></svg></button>
      <div class="track"><div class="thumb"><svg viewBox="0 0 8 8"><path d="M1 1v6M3 1v6M5 1v6M7 1v6" stroke="#c4d0a8"/></svg></div></div>
      <button aria-label="Scroll right"><svg viewBox="0 0 10 10"><path d="M4 2l3 3-3 3" fill="none" stroke="#fff" stroke-width="2"/></svg></button>
    </div>
  </main>

  <aside class="dock right">
    <div class="vbar" role="toolbar" aria-label="Sketch">
      <i class="grip"></i>
      <button aria-label="Sketch"><svg><use href="#sketch"/></svg></button><button aria-label="3D sketch"><svg><use href="#sk3d"/></svg></button><button aria-label="Smart dimension"><svg><use href="#dim"/></svg></button>
      <i class="sep"></i>
      <button aria-label="Line"><svg><use href="#line"/></svg></button><button aria-label="Rectangle"><svg><use href="#rect"/></svg></button><button aria-label="Circle"><svg><use href="#circle"/></svg></button><button aria-label="Centerpoint arc"><svg><use href="#carc"/></svg></button><button aria-label="Tangent arc"><svg><use href="#tarc"/></svg></button><button aria-label="Three point arc"><svg><use href="#parc"/></svg></button><button aria-label="Sketch fillet" disabled><svg><use href="#sfil"/></svg></button><button aria-label="Centerline"><svg><use href="#cline"/></svg></button><button aria-label="Spline"><svg><use href="#spline"/></svg></button><button aria-label="Point"><svg><use href="#bluestar"/></svg></button><button aria-label="Plane"><svg><use href="#hatch"/></svg></button>
      <i class="sep"></i>
      <button aria-label="Add relation" disabled><svg><use href="#perp"/></svg></button><button aria-label="Display relations" disabled><svg><use href="#rel"/></svg></button>
      <div class="pair"><button aria-label="Quick snaps" disabled><svg><use href="#qsnap"/></svg></button><button class="drop" aria-label="Quick snaps list" disabled></button></div>
      <i class="sep"></i>
      <button aria-label="Mirror entities" disabled><svg><use href="#smir"/></svg></button><button aria-label="Convert entities" disabled><svg><use href="#conv"/></svg></button><button aria-label="Offset entities" disabled><svg><use href="#offs"/></svg></button><button aria-label="Trim entities" disabled><svg><use href="#trim"/></svg></button><button aria-label="Extend entities" disabled><svg><use href="#ext"/></svg></button><button aria-label="Move entities" disabled><svg><use href="#mov"/></svg></button>
    </div>
    <div class="vbar sheet" role="toolbar" aria-label="Command manager">
      <i class="grip"></i>
      <div class="pair chosen"><button aria-label="Features"><svg><use href="#featmenu"/></svg></button><button class="drop" aria-label="Features list"></button></div>
      <div class="pair tinted"><button aria-label="Sketch"><svg><use href="#sketchmenu"/></svg></button><button class="drop" aria-label="Sketch list"></button></div>
      <i class="sep"></i>
      <button aria-label="Extruded boss"><svg><use href="#extrude"/></svg></button><button aria-label="Extruded cut"><svg><use href="#cutex"/></svg></button><button aria-label="Revolved boss"><svg><use href="#revolve"/></svg></button><button aria-label="Revolved cut"><svg><use href="#revcut"/></svg></button>
      <button class="more down">»</button>
    </div>
  </aside>
</div>

<footer class="status">
  <span class="ready">Ready</span><i></i><i></i><span class="mode">Editing Part</span><i></i><i></i><i></i>
  <button class="tip" aria-label="Quick tips">?</button>
  <svg class="resize" viewBox="0 0 12 12"><path d="M9 2h2M6 6h2M9 6h2M3 10h2M6 10h2M9 10h2" stroke="#b0ac98" stroke-width="2"/></svg>
</footer>
</body>
</html>
```

FILE: styles.css
```css
* { box-sizing: border-box; }

:root {
  --face: #ece9d8;
  --shade: #c8c5b4;
  --frame: #a3b683;
}

body {
  margin: 0;
  height: 100vh;
  display: flex;
  flex-direction: column;
  border: solid var(--frame);
  border-width: 0 4px 0 5px;
  background: var(--face);
  color: #111;
  font: 9px/15px "DejaVu Sans Condensed", "Noto Sans", sans-serif;
  overflow: hidden;
}

button {
  margin: 0;
  padding: 0;
  border: 0;
  background: none;
  color: inherit;
  font: inherit;
  display: flex;
  align-items: center;
  justify-content: center;
}

svg { display: block; width: 16px; height: 16px; flex: none; }
ul { margin: 0; padding: 0; list-style: none; }
.defs { position: absolute; width: 0; height: 0; }
.dim { fill: #dad6c2; stroke: #b2ae98; }

/* Title bar */
.titlebar {
  height: 24px;
  flex: none;
  display: flex;
  align-items: center;
  gap: 2px;
  margin: 0 -4px 0 -5px;
  padding: 2px 3px 0 4px;
  background: linear-gradient(#d4e2b0, #a5b57f 20%, #a9b984 60%, #bccb9b);
}
.titlebar h1 {
  flex: 1;
  margin: 0;
  color: #fff;
  font: bold 11px/20px "DejaVu Sans Condensed", sans-serif;
  text-shadow: 1px 1px 1px #4c5a34;
}
.win {
  width: 18px;
  height: 18px;
  border: 1px solid #eef3df;
  border-radius: 3px;
  background: linear-gradient(135deg, #b8c79a, #7f9360);
}
.win svg { width: 14px; height: 14px; }
.win.close { background: linear-gradient(135deg, #e89070, #c04020); }

/* Menu */
.menubar {
  height: 18px;
  flex: none;
  display: flex;
  align-items: center;
  gap: 11px;
  border-bottom: 1px solid var(--shade);
}
.menubar .ico { margin-right: -8px; }
.docwin { margin-left: auto; display: flex; gap: 1px; }
.docwin button { width: 15px; height: 14px; background: #f8f7f0; }
.docwin svg { width: 12px; height: 12px; }

/* Horizontal toolbars */
.toolrow { height: 26px; flex: none; display: flex; border-bottom: 1px solid var(--shade); border-top: 1px solid #fff; }
.bar { display: flex; align-items: center; border-left: 1px solid #fff; border-right: 1px solid var(--shade); }
.bar button { width: 20px; height: 20px; flex: none; }
.grip { flex: none; width: 4px; height: 18px; margin: 0 1px; border: 1px solid var(--shade); border-left-color: #fff; background: #f6f4ea; }
.sep { flex: none; width: 1px; height: 16px; margin: 0 2px; background: var(--shade); }
.bar .drop { width: 11px; }
.drop::after { content: ""; border: 2px solid transparent; border-top: 3px solid #222; border-bottom: 0; }
.drop:disabled::after { border-top-color: #bbb8a6; }
.bar .on { border: 1px solid #9cb0c8; border-radius: 2px; background: #fff; }
.main { width: 450px; }
.view { flex: 1; }
.view .grip { margin-right: 5px; }
.bar .more { width: 12px; margin-left: auto; align-self: flex-start; font-size: 13px; font-weight: bold; height: 16px; }
.orient { width: 41px; }
.orient .grip { margin-right: 3px; }
.second { justify-content: flex-end; }
.tools { width: 206px; }
.tools button, .refs button { flex: 1; }
.refs { width: 106px; }
.tools .grip, .refs .grip { margin: 0 4px; }

/* Workspace */
.workspace {
  flex: 1;
  min-height: 0;
  display: grid;
  grid-template-columns: 33px 162px minmax(0, 1fr) 34px;
  border-bottom: 1px solid #a8a594;
}
.dock { display: flex; flex-direction: column; min-height: 0; }
.vbar { display: flex; flex-direction: column; align-items: flex-start; }
.vbar .grip { width: 30px; height: 4px; margin: 3px 0 3px 1px; }
.vbar .sep { width: 28px; height: 1px; margin: 4px 0 4px 2px; }
.vbar button { width: 19px; height: 19px; flex: none; }
.vbar .drop { width: 10px; }
.pair { display: flex; }
.sheet { flex: 1; border-top: 1px solid var(--shade); }
.vbar .more { align-self: flex-end; margin: auto 8px 2px 0; width: 12px; height: 12px; font-size: 12px; font-weight: bold; transform: rotate(90deg); }
.left .sheet { border-right: 1px solid var(--shade); margin-right: 6px; }
.left .sheet .grip { width: 22px; }
.left .sheet .sep { width: 20px; }
.left .sheet .more { margin-right: 1px; }
.right .vbar { padding-left: 2px; }
.chosen { border: 1px solid #9cb0c8; background: #fff; margin-left: -2px; padding-left: 1px; }
.tinted { background: #dce4f0; margin-left: -1px; padding-right: 1px; }

/* Feature manager */
.manager {
  display: flex;
  flex-direction: column;
  margin: 4px 0 0;
  padding: 0 2px 0 1px;
  border-top: 2px solid #333;
  border-left: 2px solid #555;
  border-right: 1px solid #fff;
}
.tabs { display: flex; align-items: flex-end; height: 23px; flex: none; }
.tab { width: 23px; height: 20px; border: 1px solid #c4c1b0; border-bottom: 0; background: #e6e3d2; }
.tab svg { width: 15px; height: 15px; }
.tab.active { height: 23px; border-top: 2px solid #e87020; background: #fff; }
.expand { width: 14px; height: 14px; margin: 0 0 4px auto; border: 1px solid #a0b4d0; border-radius: 50%; background: #fff; }
.expand svg { width: 12px; height: 12px; }
.tree { flex: 1; border-top: 1px solid #888; background: linear-gradient(#fff, #ffffd4 55%, #ffffbe); }
.root { display: flex; align-items: center; gap: 3px; height: 16px; padding-left: 2px; font-size: 10px; }
.root svg { width: 15px; height: 15px; }
.tree ul { position: relative; border-bottom: 1px solid #222; box-shadow: inset 0 -2px #e0d800; padding-bottom: 1px; }
.tree ul::before { content: ""; position: absolute; left: 10px; top: 0; bottom: 8px; border-left: 1px dotted #b8b8a8; }
.tree li { display: flex; align-items: center; height: 15px; padding-left: 19px; position: relative; }
.tree li svg { width: 14px; height: 14px; margin-right: 3px; }
.tree li span { line-height: 13px; }
.tree li::before { content: ""; position: absolute; left: 11px; width: 8px; border-top: 1px dotted #b8b8a8; }
.tree .plus::after {
  content: "";
  position: absolute;
  left: 7px;
  width: 7px;
  height: 7px;
  border: 1px solid #999;
  background: linear-gradient(#222, #222) center / 3px 1px no-repeat, linear-gradient(#222, #222) center / 1px 3px no-repeat, #fff;
}
.tree .sel { background: #95a87a; color: #f4f6ea; }
.off { color: #929288; }

/* Graphics area */
.viewport {
  display: grid;
  grid-template: minmax(0, 1fr) 14px / minmax(0, 1fr) 14px;
  margin: 0 1px 0 6px;
  border: solid #222;
  border-width: 2px 0 0 2px;
  background: #fafaf6;
}
.canvas { position: relative; background: linear-gradient(#fff 4%, #ffffe8 30%, #fffec8 68%, #fffdb8); }
.scene { width: 100%; height: 100%; }
.scene text { font-family: "Liberation Sans", sans-serif; }
.orientation { position: absolute; left: -1px; bottom: 0; width: 85px; height: 16px; display: flex; border: 1px solid #111; }
.orientation select { appearance: none; flex: 1; min-width: 0; height: 14px; margin: 0; border: 0; border-right: 1px solid #111; border-radius: 0; background: none; color: inherit; font: inherit; line-height: 14px; padding: 0 0 0 15px; }
.orientation svg { width: 8px; height: 8px; margin: 3px 1px; }
.vscroll { display: flex; flex-direction: column; justify-content: space-between; padding-top: 5px; background: #fdfdfb; }
.vscroll button { width: 13px; height: 13px; background: #f0eee4; border: 1px solid #e2dfd0; }
.vscroll svg, .hscroll svg { width: 10px; height: 10px; }
.hscroll { display: flex; padding: 1px 0 1px 5px; }
.hscroll > button { width: 13px; background: #a9b98b; border: 1px solid #dbe3c8; border-radius: 2px; }
.track { flex: 1; display: flex; padding: 0 9px 0 29px; }
.thumb { flex: 1; display: flex; align-items: center; justify-content: center; border: 1px solid #8ea070; background: linear-gradient(#b0bf92, #97a97a); }

/* Status bar */
.status { height: 17px; flex: none; display: flex; align-items: center; border-top: 1px solid #fff; }
.ready { flex: 1; }
.status i { width: 7px; height: 11px; border-left: 1px solid var(--shade); }
.mode { padding: 0 4px; }
.tip { width: 12px; height: 12px; margin: 0 0 0 6px; border: 1px solid #6898c0; background: #fffcb0; color: #187018; font-weight: bold; line-height: 10px; }
.resize { width: 12px; height: 12px; margin-left: 48px; }
```
